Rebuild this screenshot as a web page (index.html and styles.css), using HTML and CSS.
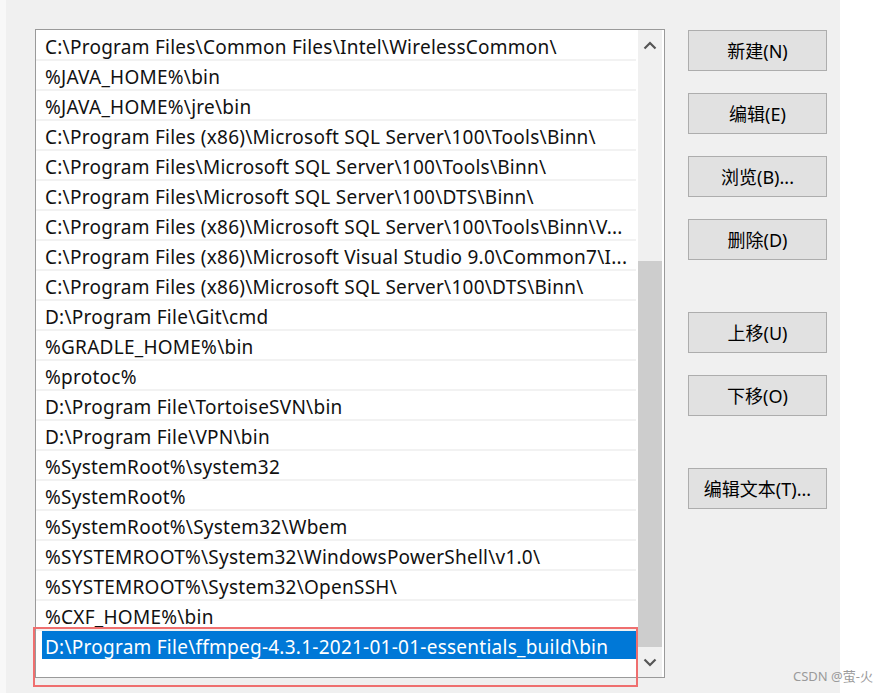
FILE: index.html
```html
<!DOCTYPE html>
<html>
<head>
<meta charset="utf-8">
<link rel="stylesheet" href="styles.css">
</head>
<body>
<div class="page">
  <div class="list">
    <div class="rows">
      <div class="row">C:\Program Files\Common Files\Intel\WirelessCommon\</div>
      <div class="row">%JAVA_HOME%\bin</div>
      <div class="row">%JAVA_HOME%\jre\bin</div>
      <div class="row">C:\Program Files (x86)\Microsoft SQL Server\100\Tools\Binn\</div>
      <div class="row">C:\Program Files\Microsoft SQL Server\100\Tools\Binn\</div>
      <div class="row">C:\Program Files\Microsoft SQL Server\100\DTS\Binn\</div>
      <div class="row">C:\Program Files (x86)\Microsoft SQL Server\100\Tools\Binn\V...</div>
      <div class="row">C:\Program Files (x86)\Microsoft Visual Studio 9.0\Common7\I...</div>
      <div class="row">C:\Program Files (x86)\Microsoft SQL Server\100\DTS\Binn\</div>
      <div class="row">D:\Program File\Git\cmd</div>
      <div class="row">%GRADLE_HOME%\bin</div>
      <div class="row">%protoc%</div>
      <div class="row">D:\Program File\TortoiseSVN\bin</div>
      <div class="row">D:\Program File\VPN\bin</div>
      <div class="row">%SystemRoot%\system32</div>
      <div class="row">%SystemRoot%</div>
      <div class="row">%SystemRoot%\System32\Wbem</div>
      <div class="row">%SYSTEMROOT%\System32\WindowsPowerShell\v1.0\</div>
      <div class="row">%SYSTEMROOT%\System32\OpenSSH\</div>
      <div class="row">%CXF_HOME%\bin</div>
      <div class="row sel">D:\Program File\ffmpeg-4.3.1-2021-01-01-essentials_build\bin</div>
    </div>
    <div class="scrollbar">
      <div class="arrow">
        <svg width="14" height="9" viewBox="0 0 14 9"><polyline points="1.5,7.5 7,2 12.5,7.5" fill="none" stroke="#555" stroke-width="2.2"/></svg>
      </div>
      <div class="track"><div class="thumb"></div></div>
      <div class="arrow">
        <svg width="14" height="9" viewBox="0 0 14 9"><polyline points="1.5,1.5 7,7 12.5,1.5" fill="none" stroke="#555" stroke-width="2.2"/></svg>
      </div>
    </div>
  </div>
  <div class="buttons">
    <div class="btn">新建(N)</div>
    <div class="btn">编辑(E)</div>
    <div class="btn">浏览(B)...</div>
    <div class="btn">删除(D)</div>
    <div class="btn gap">上移(U)</div>
    <div class="btn">下移(O)</div>
    <div class="btn gap">编辑文本(T)...</div>
  </div>
  <div class="mark"></div>
  <div class="watermark">CSDN @萤-火</div>
</div>
</body>
</html>
```
FILE: styles.css
```css
html, body {
  margin: 0;
  padding: 0;
  background: #ffffff;
}
.page {
  position: relative;
  box-sizing: border-box;
  width: 840px;
  height: 693px;
  background: #f0f0f0;
  border-left: 6px solid #f8f8f8;
  display: flex;
  align-items: flex-start;
  padding: 29px 0 0 29px;
}
.list {
  box-sizing: border-box;
  width: 630px;
  height: 649px;
  border: 1px solid #9a9a9a;
  background: #fff;
  display: flex;
  overflow: hidden;
}
.rows {
  width: 600px;
  margin-right: 2px;
  padding-top: 1px;
  font-family: "Noto Sans", "Open Sans", sans-serif;
  font-size: 19px;
  letter-spacing: 0.25px;
  color: #111;
}
.row {
  box-sizing: border-box;
  height: 30px;
  padding: 4px 0 0 9px;
  line-height: 24px;
  border-bottom: 2px solid #f2f2f2;
  white-space: nowrap;
  overflow: hidden;
}
.row.sel {
  margin-left: 6px;
  padding-left: 3px;
  background: #0078d7;
  color: #fff;
  border-bottom-color: #fff;
}
.scrollbar {
  width: 24px;
  background: #f0f0f0;
  display: flex;
  flex-direction: column;
}
.arrow {
  height: 30px;
  display: flex;
  align-items: center;
  justify-content: center;
}
.track {
  flex: 1;
}
.thumb {
  margin-top: 201px;
  height: 386px;
  background: #cdcdcd;
}
.buttons {
  margin-left: 23px;
  padding-top: 1px;
  display: flex;
  flex-direction: column;
  gap: 22px;
}
.btn {
  box-sizing: border-box;
  width: 139px;
  height: 41px;
  padding-bottom: 2px;
  background: #e1e1e1;
  border: 1px solid #adadad;
  display: flex;
  align-items: center;
  justify-content: center;
  font-family: "Noto Sans", "Noto Sans CJK SC", sans-serif;
  font-size: 18px;
  color: #000;
}
.btn.gap {
  margin-top: 30px;
}
.mark {
  position: absolute;
  left: 27px;
  top: 627px;
  width: 605px;
  height: 60px;
  box-sizing: border-box;
  border: 2px solid #ef6f6f;
}
.watermark {
  position: absolute;
  left: 787px;
  top: 666px;
  font-family: "Noto Sans", "Noto Sans CJK SC", sans-serif;
  font-size: 13px;
  color: #9a9a9a;
  white-space: nowrap;
}
```
